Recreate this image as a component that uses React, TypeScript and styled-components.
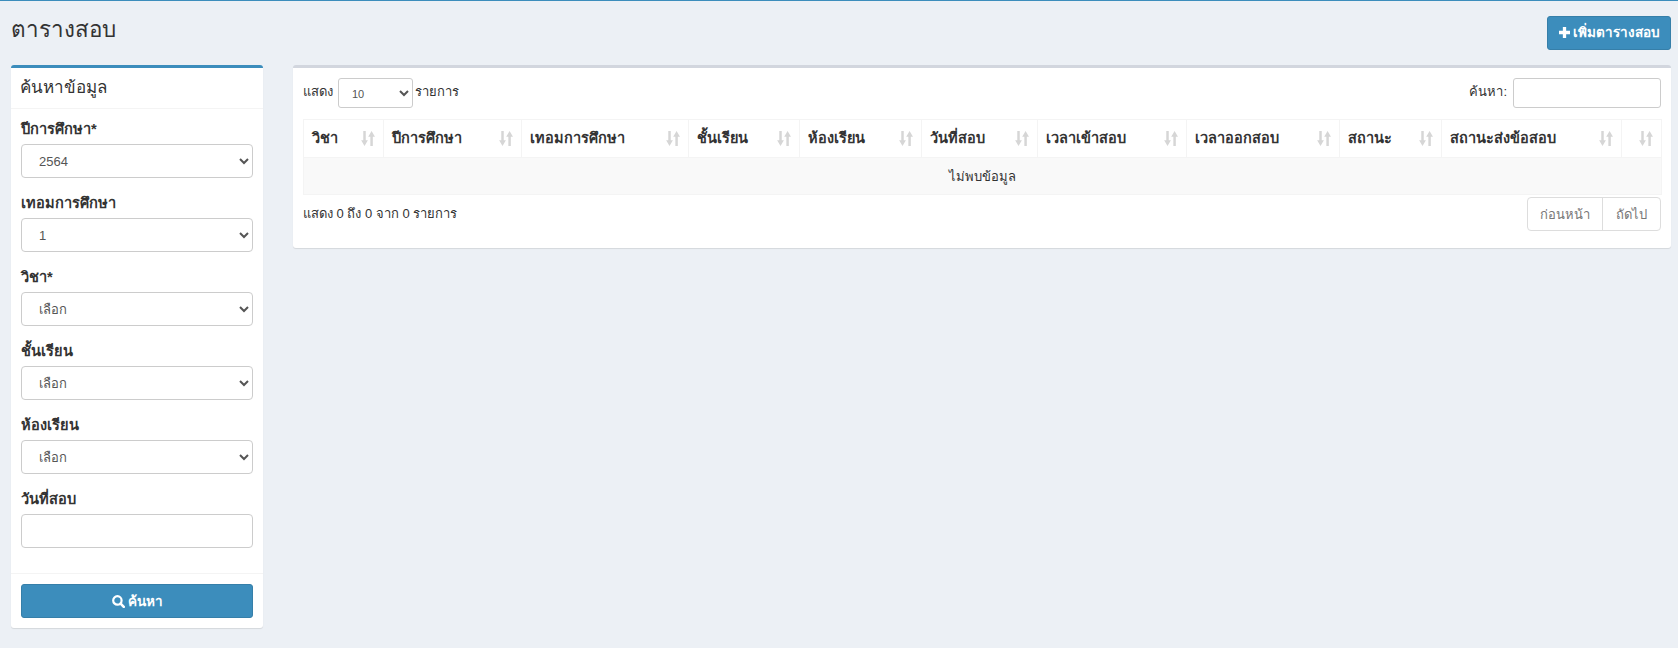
import React from "react";
import styled, { createGlobalStyle } from "styled-components";

const Global = createGlobalStyle`
  html, body { margin: 0; padding: 0; background: #ecf0f5; }
  body { font-family: "Liberation Sans", "Noto Sans", "Noto Sans CJK SC", sans-serif; font-size: 14px; color: #333; }
  * { box-sizing: border-box; }
`;
const Page = styled.div`
  width: 1678px; height: 648px; border-top: 1px solid #3c8dbc; padding: 15px 7px 0 11px; overflow: hidden;
`;
const Header = styled.header`
  display: flex; justify-content: space-between; align-items: flex-start; height: 49px;
`;
const Title = styled.h1`
  margin: 0; font-size: 22.4px; font-weight: 400; line-height: 27px;
`;
const PrimaryButton = styled.button<{ $full?: boolean }>`
  display: flex; align-items: center; justify-content: center; gap: 3px;
  height: 34px; width: ${(p) => (p.$full ? "100%" : "124px")}; padding: 0 0 ${(p) => (p.$full ? "0" : "2px")};
  background: #3c8dbc; border: 1px solid #367fa9; border-radius: 3px;
  color: #fff; font: 700 13.5px "Liberation Sans", "Noto Sans", sans-serif;
`;
const ButtonIcon = styled.svg<{ $size: number }>`
  width: ${(p) => p.$size}px; height: ${(p) => p.$size}px; flex: none;
`;
const Columns = styled.div`
  display: grid; grid-template-columns: 252px 1378px; column-gap: 30px; align-items: start;
`;
const Box = styled.section<{ $accent: string }>`
  background: #fff; border-top: 3px solid ${(p) => p.$accent}; border-radius: 3px;
  box-shadow: 0 1px 1px rgba(0,0,0,.1);
`;
const BoxTitle = styled.h3`
  margin: 0; height: 41px; padding: 0 10px 4px 9px; display: flex; align-items: center;
  font-size: 17px; font-weight: 400; border-bottom: 1px solid #f4f4f4;
`;
const FormBody = styled.div`
  padding: 10px 10px 25px; display: flex; flex-direction: column; gap: 15px;
`;
const Field = styled.div`
  display: flex; flex-direction: column; gap: 5px;
`;
const Label = styled.label`
  font-weight: 700; font-size: 14.6px; line-height: 20px; height: 20px;
`;
const Select = styled.select`
  height: 34px; width: 100%; border: 1px solid #ccc; border-radius: 4px; background: #fff;
  padding: 0 13px; color: #555; font: 13px "Liberation Sans", "Noto Sans", sans-serif;
`;
const TextInput = styled.input`
  height: 34px; width: 100%; border: 1px solid #ccc; border-radius: 4px; background: #fff;
`;
const BoxFooter = styled.div`
  padding: 10px; border-top: 1px solid #f4f4f4;
`;
const TableBody = styled.div`
  padding: 10px 10px 17px;
`;
const Controls = styled.div`
  display: flex; justify-content: space-between; align-items: flex-start; height: 30px; margin-bottom: 11px; font-size: 13px;
`;
const Inline = styled.label`
  display: flex; align-items: flex-start; line-height: 28px;
`;
const LengthSelect = styled.select`
  width: 75px; height: 30px; margin: 0 2px 0 5px; border: 1px solid #ccc; border-radius: 3px; background: #fff;
  padding: 2px 9px 0; color: #555; font: 11px "Liberation Sans", "Noto Sans", sans-serif;
`;
const SearchInput = styled.input`
  width: 148px; height: 30px; margin-left: 6px; border: 1px solid #ccc; border-radius: 3px;
`;
const Table = styled.table`
  width: 1358px; table-layout: fixed; border-collapse: collapse; font-size: 14.5px;
`;
const Th = styled.th<{ $w: number }>`
  width: ${(p) => p.$w}px; height: 38px; padding: 0 8px 2px; text-align: left; font-weight: 700;
  border: 1px solid #f4f4f4; position: relative; white-space: nowrap;
`;
const SortIcon = styled.svg`
  position: absolute; right: 8px; top: 11px; width: 14px; height: 15px; fill: #d6d6d6;
`;
const EmptyCell = styled.td`
  height: 37px; background: #f9f9f9; text-align: center; border: 1px solid #f4f4f4; font-size: 13px;
`;
const Footer = styled.div`
  display: flex; justify-content: space-between; align-items: flex-start; margin-top: 2px; font-size: 13px;
`;
const Info = styled.div`
  padding-top: 8px; line-height: 18px;
`;
const Pager = styled.div`
  display: flex; height: 34px; border: 1px solid #ddd; border-radius: 4px; color: #777;
`;
const PageItem = styled.span<{ $w: number; $divider?: boolean }>`
  width: ${(p) => p.$w}px; display: flex; align-items: center; justify-content: center;
  ${(p) => (p.$divider ? "border-right: 1px solid #ddd;" : "")}
`;

const columns: [string, number][] = [
  ["วิชา", 80], ["ปีการศึกษา", 138], ["เทอมการศึกษา", 167], ["ชั้นเรียน", 111],
  ["ห้องเรียน", 122], ["วันที่สอบ", 116], ["เวลาเข้าสอบ", 149], ["เวลาออกสอบ", 153],
  ["สถานะ", 102], ["สถานะส่งข้อสอบ", 180], ["", 40],
];
const fields: [string, string][] = [
  ["ปีการศึกษา*", "2564"], ["เทอมการศึกษา", "1"], ["วิชา*", "เลือก"], ["ชั้นเรียน", "เลือก"], ["ห้องเรียน", "เลือก"],
];

const Sort = () => (
  <SortIcon viewBox="0 0 13 14" aria-hidden>
    <path d="M2.1 0h2.3v8.6h2L3.25 14 .1 8.6h2z" />
    <path d="M8.7 14H11V5.4h2L9.85 0 6.7 5.4h2z" />
  </SortIcon>
);

const PlusIcon = () => (
  <ButtonIcon $size={11} viewBox="0 0 10 10" aria-hidden>
    <path fill="#fff" d="M3.5 0h3v3.5H10v3H6.5V10h-3V6.5H0v-3h3.5z" />
  </ButtonIcon>
);

const SearchIcon = () => (
  <ButtonIcon $size={13} viewBox="0 0 13 13" aria-hidden>
    <circle cx="5.4" cy="5.4" r="4.2" fill="none" stroke="#fff" strokeWidth="2.2" />
    <path d="M8.6 8.6l3.2 3.2" stroke="#fff" strokeWidth="2.6" strokeLinecap="round" />
  </ButtonIcon>
);

export default function App() {
  return (
    <Page>
      <Global />
      <Header>
        <Title>ตารางสอบ</Title>
        <PrimaryButton><PlusIcon />เพิ่มตารางสอบ</PrimaryButton>
      </Header>
      <Columns>
        <Box $accent="#3c8dbc">
          <BoxTitle>ค้นหาข้อมูล</BoxTitle>
          <FormBody>
            {fields.map(([label, value]) => (
              <Field key={label}>
                <Label>{label}</Label>
                <Select defaultValue={value}><option>{value}</option></Select>
              </Field>
            ))}
            <Field>
              <Label>วันที่สอบ</Label>
              <TextInput />
            </Field>
          </FormBody>
          <BoxFooter>
            <PrimaryButton $full><SearchIcon />ค้นหา</PrimaryButton>
          </BoxFooter>
        </Box>
        <Box $accent="#d2d6de">
          <TableBody>
            <Controls>
              <Inline>แสดง<LengthSelect><option>10</option></LengthSelect>รายการ</Inline>
              <Inline>ค้นหา:<SearchInput /></Inline>
            </Controls>
            <Table>
              <thead>
                <tr>
                  {columns.map(([name, w], i) => (
                    <Th key={i} $w={w}>{name}<Sort /></Th>
                  ))}
                </tr>
              </thead>
              <tbody>
                <tr><EmptyCell colSpan={11}>ไม่พบข้อมูล</EmptyCell></tr>
              </tbody>
            </Table>
            <Footer>
              <Info>แสดง 0 ถึง 0 จาก 0 รายการ</Info>
              <Pager>
                <PageItem $w={75} $divider>ก่อนหน้า</PageItem>
                <PageItem $w={57}>ถัดไป</PageItem>
              </Pager>
            </Footer>
          </TableBody>
        </Box>
      </Columns>
    </Page>
  );
}
